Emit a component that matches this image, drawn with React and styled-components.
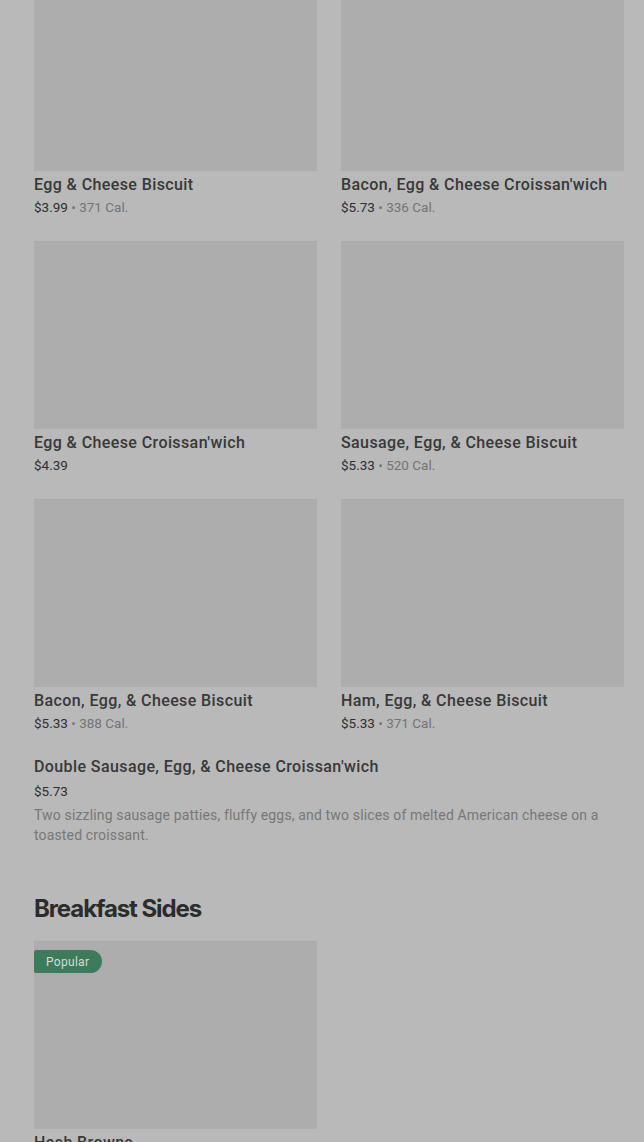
import React from "react";
import styled, { createGlobalStyle } from "styled-components";

const GlobalStyle = createGlobalStyle`
  html, body {
    margin: 0;
    padding: 0;
    background: #b9b9b9;
    overflow: hidden;
  }
  body {
    font-family: Roboto, "Liberation Sans", sans-serif;
  }
`;

const breakfast = [
  { name: "Egg & Cheese Biscuit", price: "$3.99", cal: "371 Cal." },
  { name: "Bacon, Egg & Cheese Croissan'wich", price: "$5.73", cal: "336 Cal." },
  { name: "Egg & Cheese Croissan'wich", price: "$4.39" },
  { name: "Sausage, Egg, & Cheese Biscuit", price: "$5.33", cal: "520 Cal." },
  { name: "Bacon, Egg, & Cheese Biscuit", price: "$5.33", cal: "388 Cal." },
  { name: "Ham, Egg, & Cheese Biscuit", price: "$5.33", cal: "371 Cal." },
];

const App = () => {
  return (
    <Page>
      <GlobalStyle />
      <Grid>
        {breakfast.map((item) => (
          <Card key={item.name}>
            <Thumb />
            <Title>{item.name}</Title>
            <Meta>
              {item.price}
              {item.cal && <Cal> • {item.cal}</Cal>}
            </Meta>
          </Card>
        ))}
      </Grid>

      <TextItem>
        <BigTitle>Double Sausage, Egg, &amp; Cheese Croissan'wich</BigTitle>
        <BigPrice>$5.73</BigPrice>
        <Desc>
          Two sizzling sausage patties, fluffy eggs, and two slices of melted
          American cheese on a toasted croissant.
        </Desc>
      </TextItem>

      <Heading>Breakfast Sides</Heading>
      <Grid>
        <Card>
          <Thumb>
            <Badge>Popular</Badge>
          </Thumb>
          <Title>Hash Browns</Title>
        </Card>
      </Grid>
    </Page>
  );
};

export default App;

const Page = styled.div`
  padding: 0 20px 0 34px;
  margin-top: -17px;
  height: 1160px;
  overflow: hidden;
`;

const Grid = styled.div`
  display: grid;
  grid-template-columns: 283px 283px;
  column-gap: 24px;
  row-gap: 24px;
`;

const Card = styled.div`
  display: flex;
  flex-direction: column;
`;

const Thumb = styled.div`
  position: relative;
  height: 188px;
  background: #adadad;
  border-top: 1px solid #a9a9a9;
  box-sizing: border-box;
`;

const Badge = styled.span`
  position: absolute;
  top: 8px;
  left: 0;
  height: 23px;
  padding: 0 13px 0 12px;
  display: flex;
  align-items: center;
  background: #3c7b5c;
  color: #d3ddd7;
  font-size: 12px;
  letter-spacing: 0.3px;
  border-radius: 2px 12px 12px 2px;
`;

const Title = styled.div`
  margin-top: 4px;
  font-size: 16px;
  line-height: 20px;
  font-weight: 500;
  letter-spacing: 0.4px;
  color: #383838;
  white-space: nowrap;
`;

const Meta = styled.div`
  margin-top: 2px;
  font-size: 13.5px;
  line-height: 20px;
  color: #2f2f2f;
`;

const Cal = styled.span`
  color: #747474;
`;

const TextItem = styled.div`
  margin-top: 22px;
  display: flex;
  flex-direction: column;
`;

const BigTitle = styled.div`
  font-size: 16px;
  line-height: 24px;
  font-weight: 500;
  letter-spacing: 0.4px;
  color: #383838;
`;

const BigPrice = styled.div`
  font-size: 13.5px;
  line-height: 24px;
  color: #2f2f2f;
`;

const Desc = styled.div`
  margin-top: 2px;
  font-size: 14px;
  line-height: 20px;
  letter-spacing: 0.15px;
  color: #777777;
  padding-right: 10px;
`;

const Heading = styled.h2`
  margin: 48px 0 16px;
  font-family: Inter, "Liberation Sans", sans-serif;
  font-size: 24px;
  line-height: 32px;
  font-weight: 700;
  letter-spacing: -1.1px;
  color: #2c2c2c;
`;
